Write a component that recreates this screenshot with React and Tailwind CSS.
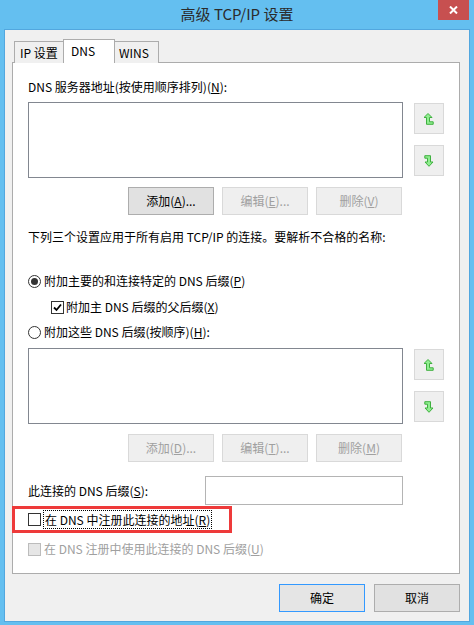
import React from 'react';

const Btn = ({ children, disabled, primary, className = '' }) => (
	<div
		className={
			'w-[86px] h-[28px] flex items-center justify-center border ' +
			(disabled
				? 'border-[#d9d9d9] bg-[#efefef] text-[#a0a0a0] '
				: primary
				? 'border-[#3399ff] bg-[#e5e5e5] text-black '
				: 'border-[#adadad] bg-[#e1e1e1] text-black ') +
			className
		}
	>
		{children}
	</div>
);

const ArrowBtn = ({ up }) => (
	<div className="w-[30px] h-[31px] border border-[#d9d9d9] bg-[#efefef] flex items-center justify-center">
		{up ? (
			<svg width="10" height="12" viewBox="0 0 10 12">
				<polygon
					points="4,0.5 8,4.5 5.5,4.5 5.5,8.8 9.2,8.8 9.2,11.3 2.5,11.3 2.5,4.5 0,4.5"
					fill="#90ee90"
					stroke="#3fb03f"
					strokeWidth="1"
				/>
			</svg>
		) : (
			<svg width="10" height="12" viewBox="0 0 10 12">
				<polygon
					points="0.8,0.7 6.5,0.7 6.5,7 9,7 5,11.3 1,7 3.5,7 3.5,3.2 0.8,3.2"
					fill="#90ee90"
					stroke="#3fb03f"
					strokeWidth="1"
				/>
			</svg>
		)}
	</div>
);

const ListBox = () => (
	<div className="flex">
		<div className="w-[375px] h-[76px] border border-[#828790] bg-white" />
		<div className="ml-[11px] pt-[1px] flex flex-col gap-[11px]">
			<ArrowBtn up />
			<ArrowBtn />
		</div>
	</div>
);

const Check = ({ checked, disabled }) => (
	<div
		className={
			'w-[13px] h-[13px] border flex items-center justify-center shrink-0 ' +
			(disabled ? 'border-[#bcbcbc] bg-[#e6e6e6]' : 'border-[#333333] bg-white')
		}
	>
		{checked && (
			<svg width="9" height="9" viewBox="0 0 9 9">
				<polyline points="1,4.5 3.5,7 8,1.5" fill="none" stroke="#000" strokeWidth="1.8" />
			</svg>
		)}
	</div>
);

const Radio = ({ checked }) => (
	<div className="w-[13px] h-[13px] rounded-full border border-[#333333] bg-white flex items-center justify-center shrink-0">
		{checked && <div className="w-[7px] h-[7px] rounded-full bg-[#333333]" />}
	</div>
);

export default function App() {
	return (
		<div className="w-[474px] h-[625px] bg-[#64bff0] flex flex-col font-['Noto_Sans_CJK_SC',sans-serif] text-[12px] leading-[16px] text-black">
			<div className="h-[29px] relative flex items-center justify-center">
				<span className="text-[15px] leading-[20px] text-[#2b2b2b] -mt-[1px]">高级 TCP/IP 设置</span>
				<div className="absolute right-[5px] top-0 w-[31px] h-[20px] bg-[#c75050] flex items-center justify-center">
					<svg width="9" height="8" viewBox="0 0 9 8">
						<path d="M1 0.5 L8 7.5 M8 0.5 L1 7.5" stroke="#fff" strokeWidth="2" />
					</svg>
				</div>
			</div>

			<div className="mx-[4px] mb-[3px] flex-1 bg-[#f0f0f0] border border-[#52a7df] pl-[7px] pr-[9px] pt-[9px] flex flex-col">
				<div className="flex items-end pl-[2px] relative z-10 -mb-px">
					<div className="w-[49px] h-[22px] border border-r-0 border-b-0 border-[#acacac] bg-[#f0f0f0] pl-[5px] flex items-center">
						IP 设置
					</div>
					<div className="w-[52px] h-[24px] border border-b-0 border-[#acacac] bg-white pl-[7px] pt-[3px]">
						DNS
					</div>
					<div className="w-[44px] h-[22px] border border-l-0 border-b-0 border-[#acacac] bg-[#f0f0f0] pl-[4px] flex items-center">
						WINS
					</div>
				</div>

				<div className="h-[512px] border border-[#acacac] bg-white pl-[15px] flex flex-col">
					<div className="mt-[16px] h-[16px]">
						DNS 服务器地址(按使用顺序排列)(<u>N</u>):
					</div>
					<div className="mt-[7px]">
						<ListBox />
					</div>
					<div className="mt-[9px] ml-[100px] flex gap-[8px]">
						<Btn>
							添加(<u>A</u>)...
						</Btn>
						<Btn disabled>
							编辑(<u>E</u>)...
						</Btn>
						<Btn disabled>
							删除(<u>V</u>)
						</Btn>
					</div>
					<div className="mt-[14px] h-[16px]">下列三个设置应用于所有启用 TCP/IP 的连接。要解析不合格的名称:</div>

					<div className="mt-[28px] h-[16px] flex items-center gap-[3px]">
						<Radio checked />
						<span>
							附加主要的和连接特定的 DNS 后缀(<u>P</u>)
						</span>
					</div>
					<div className="mt-[10px] h-[16px] flex items-center gap-[2px] ml-[23px]">
						<Check checked />
						<span>
							附加主 DNS 后缀的父后缀(<u>X</u>)
						</span>
					</div>
					<div className="mt-[9px] h-[16px] flex items-center gap-[3px]">
						<Radio />
						<span>
							附加这些 DNS 后缀(按顺序)(<u>H</u>):
						</span>
					</div>
					<div className="mt-[8px]">
						<ListBox />
					</div>
					<div className="mt-[10px] ml-[100px] flex gap-[8px]">
						<Btn disabled>
							添加(<u>D</u>)...
						</Btn>
						<Btn disabled>
							编辑(<u>T</u>)...
						</Btn>
						<Btn disabled>
							删除(<u>M</u>)
						</Btn>
					</div>

					<div className="mt-[14px] flex items-center">
						<span className="w-[177px]">
							此连接的 DNS 后缀(<u>S</u>):
						</span>
						<div className="w-[198px] h-[29px] border border-[#b4b4b4] bg-white" />
					</div>

					<div className="mt-[1px] -ml-[16px] w-[220px] h-[27px] border-[3px] border-[#ee3a3a] flex items-center pl-[13px]">
						<Check />
						<span className="ml-[2px] px-[1px] border border-dotted border-black leading-[17px]">
							在 DNS 中注册此连接的地址(<u>R</u>)
						</span>
					</div>

					<div className="mt-[8px] h-[16px] flex items-center gap-[3px] text-[#a0a0a0]">
						<Check disabled />
						<span>
							在 DNS 注册中使用此连接的 DNS 后缀(<u>U</u>)
						</span>
					</div>
				</div>

				<div className="mt-[10px] flex justify-end gap-[9px]">
					<Btn primary>确定</Btn>
					<Btn>取消</Btn>
				</div>
			</div>
		</div>
	);
}
